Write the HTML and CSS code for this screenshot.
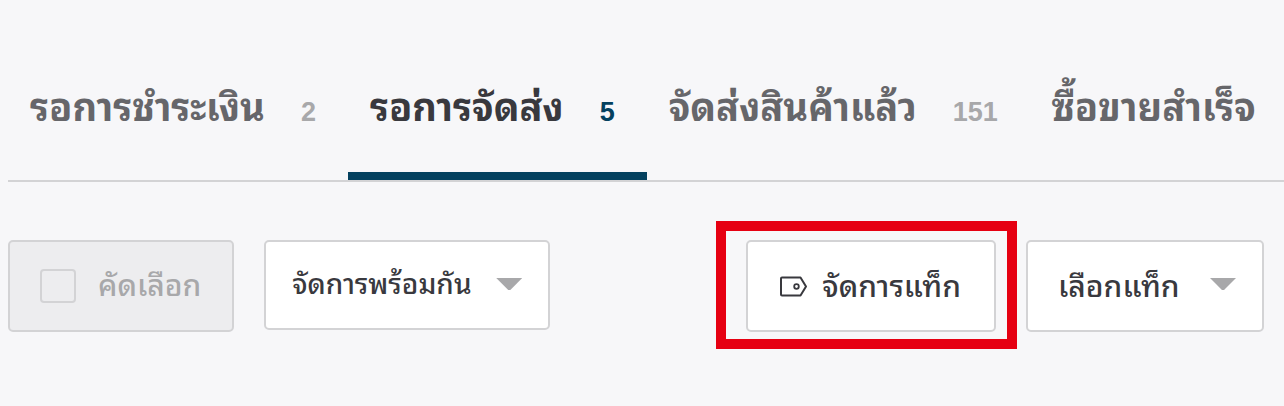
FILE: index.html
```html
<!DOCTYPE html>
<html lang="th">
<head>
  <meta charset="UTF-8" />
  <meta name="viewport" content="width=device-width, initial-scale=1.0"/>
  <title>รอการจัดส่ง</title>
  <link rel="stylesheet" href="styles.css">
</head>
<body>

<nav class="tabs">
  <a href="#payment" class="tab">รอการชำระเงิน <span class="count">2</span></a>
  <a href="#shipping" class="tab active" aria-current="page">รอการจัดส่ง <span class="count">5</span></a>
  <a href="#shipped" class="tab">จัดส่งสินค้าแล้ว <span class="count">151</span></a>
  <a href="#done" class="tab">ซื้อขายสำเร็จ</a>
</nav>

<div class="toolbar">
  <label class="box filter"><input type="checkbox" disabled /> คัดเลือก</label>
  <div class="dropdown bulk">
    <select class="box" aria-label="จัดการพร้อมกัน">
      <option>จัดการพร้อมกัน</option>
    </select>
  </div>
  <div class="highlight">
    <button type="button" class="box manage">
      <svg width="28" height="22" viewBox="0 0 28 22" fill="none" stroke="#39393e" stroke-width="2" stroke-linejoin="round" aria-hidden="true">
        <path d="M2 1.500H20.500L26 10.500L20.500 19.500H2Q1 19.500 1 18.500V2.500Q1 1.500 2 1.500Z"/>
        <circle cx="16.500" cy="10.500" r="2.300" stroke-width="1.800"/>
      </svg>
      จัดการแท็ก
    </button>
  </div>
  <div class="dropdown">
    <select class="box" aria-label="เลือกแท็ก">
      <option>เลือกแท็ก</option>
    </select>
  </div>
</div>

</body>
</html>
```
FILE: styles.css
```css
* {
  box-sizing: border-box;
}

body {
  margin: 0;
  padding: 36px 0 74px 8px;
  background-color: #f7f7f9;
  color: #39393e;
  font-family: "Liberation Sans", "Noto Sans Thai Looped", "Loma", "Noto Sans Thai", "Noto Sans", sans-serif;
  overflow-x: hidden;
}

.tabs {
  display: flex;
  border-bottom: 2px solid #d3d3d5;
  white-space: nowrap;
}

.tab {
  display: flex;
  align-items: baseline;
  gap: 36px;
  height: 144px;
  padding: 42px 32px 0 22px;
  border-bottom: 8px solid transparent;
  color: #66666a;
  font-size: 38px;
  font-weight: bold;
  line-height: 60px;
  text-decoration: none;
}

.tab.active {
  color: #39393e;
  border-bottom-color: #04415f;
}

.count {
  color: #a8a8aa;
  font-size: 27px;
}

.active .count {
  color: #04415f;
}

.toolbar {
  display: flex;
  margin-top: 58px;
  padding-right: 20px;
}

.box {
  display: flex;
  align-items: center;
  height: 92px;
  border: 2px solid #d3d3d5;
  border-radius: 5px;
  background-color: #fff;
  color: #39393e;
  font-family: inherit;
  font-size: 30px;
  font-weight: 500;
  line-height: 48px;
  white-space: nowrap;
}

.filter {
  gap: 22px;
  padding: 0 31px 0 30px;
  background-color: #ededef;
  color: #a8a8aa;
}

.filter input {
  appearance: none;
  width: 36px;
  height: 34px;
  margin: 0;
  border: 2px solid #d3d3d5;
  border-radius: 4px;
}

.dropdown {
  position: relative;
}

.dropdown select {
  appearance: none;
  padding: 2px 82px 0 30px;
}

.dropdown::after {
  content: "";
  position: absolute;
  top: 38px;
  right: 28px;
  width: 26px;
  height: 12px;
  background-color: #a8a8aa;
  clip-path: polygon(0 0, 100% 0, 54% 100%, 46% 100%);
  pointer-events: none;
}

.dropdown.bulk {
  margin: 0 auto 0 30px;
}

.dropdown.bulk select {
  height: 90px;
  padding: 0 76px 0 26px;
  font-size: 28px;
}

.manage {
  gap: 14px;
  padding: 2px 33px 0 32px;
}

.highlight {
  position: relative;
  margin-right: 30px;
}

.highlight::after {
  content: "";
  position: absolute;
  inset: -19px -21px -17px -30px;
  border: 10px solid #e60012;
  pointer-events: none;
}
```
